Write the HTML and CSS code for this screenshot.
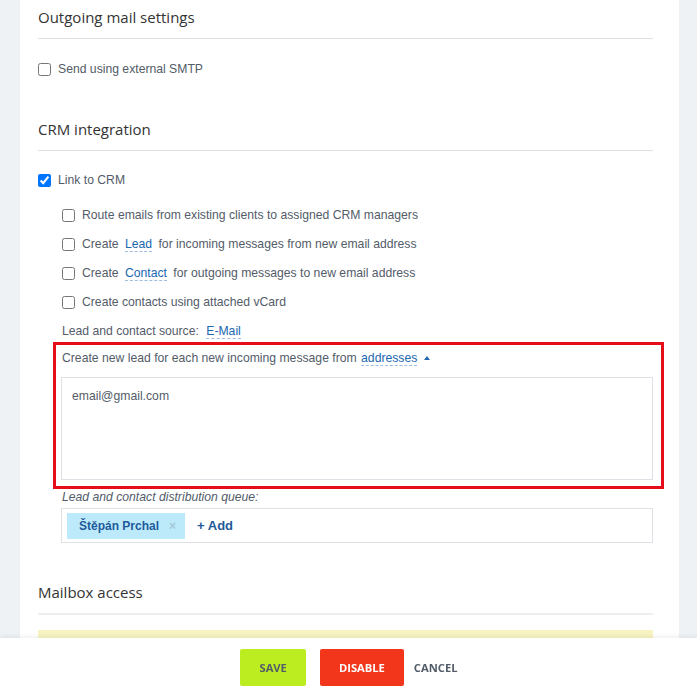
FILE: index.html
```html
<!DOCTYPE html>
<html lang="en">
<head>
<meta charset="utf-8">
<title>Mailbox settings</title>
<link rel="stylesheet" href="styles.css">
</head>
<body>
<div class="panel">
  <h2 class="section-title">Outgoing mail settings</h2>
  <label class="check-row first-row"><input type="checkbox"><span>Send using external SMTP</span></label>

  <h2 class="section-title crm-title">CRM integration</h2>
  <label class="check-row link-row"><input type="checkbox" checked><span>Link to CRM</span></label>

  <div class="sub">
    <label class="check-row sub-row first-sub"><input type="checkbox"><span>Route emails from existing clients to assigned CRM managers</span></label>
    <label class="check-row sub-row"><input type="checkbox"><span>Create <a class="dash-link">Lead</a> for incoming messages from new email address</span></label>
    <label class="check-row sub-row"><input type="checkbox"><span>Create <a class="dash-link">Contact</a> for outgoing messages to new email address</span></label>
    <label class="check-row sub-row"><input type="checkbox"><span>Create contacts using attached vCard</span></label>
    <div class="text-row sub-row">Lead and contact source: <a class="dash-link src-link">E-Mail</a></div>

    <div class="highlight">
      <div class="text-row">Create new lead for each new incoming message from <a class="dash-link addr-link">addresses</a><span class="caret"></span></div>
      <div class="textarea">email@gmail.com</div>
    </div>

    <div class="queue-label">Lead and contact distribution queue:</div>
    <div class="queue-box">
      <span class="tag">Štěpán Prchal<span class="tag-x">×</span></span>
      <a class="add-link">+ Add</a>
    </div>
  </div>

  <h2 class="section-title mailbox-title">Mailbox access</h2>
  <div class="alert"></div>
</div>

<div class="footer">
  <button class="btn btn-save">SAVE</button>
  <button class="btn btn-disable">DISABLE</button>
  <button class="btn btn-cancel">CANCEL</button>
</div>
</body>
</html>
```

FILE: styles.css
```css
html, body {
  margin: 0;
  padding: 0;
  background: #eef2f4;
  height: 100%;
  overflow: hidden;
}
body {
  font-family: "Liberation Sans", Arial, sans-serif;
  font-size: 12.2px;
  color: #535c69;
}
.panel {
  margin: 0 18px 0 20px;
  background: #fff;
  padding: 7px 26px 0 18px;
  min-height: 100%;
  box-sizing: border-box;
}
.section-title {
  margin: 0;
  font-family: "Open Sans", sans-serif;
  font-weight: 400;
  font-size: 15px;
  line-height: 20px;
  color: #333;
  padding-bottom: 11px;
  border-bottom: 1px solid #dfe0e3;
}
.crm-title { margin-top: 40px; }
.mailbox-title {
  margin-top: 39px;
  border-bottom: 2px solid #edeef0;
}
.check-row {
  display: flex;
  align-items: center;
  gap: 7px;
  height: 20px;
}
.check-row input {
  margin: 0;
  width: 13px;
  height: 13px;
}
.first-row { margin-top: 20px; }
.link-row { margin-top: 19px; }
.sub { padding-left: 24px; }
.first-sub { margin-top: 15px; }
.sub-row + .sub-row { margin-top: 9px; }
.text-row {
  height: 20px;
  line-height: 20px;
}
.dash-link {
  color: #2067b0;
  border-bottom: 1px dashed #9fbde0;
  margin: 0 3px;
}
.src-link { margin-left: 4px; }
.addr-link { margin: 0 0 0 1px; }
.caret {
  display: inline-block;
  width: 0;
  height: 0;
  border-left: 3px solid transparent;
  border-right: 3px solid transparent;
  border-bottom: 4px solid #2067b0;
  margin-left: 7px;
  vertical-align: 2px;
}
.highlight {
  margin: 1px -11px 0 -9px;
  border: 3px solid #e60d1b;
  padding: 3px 8px 6px 6px;
}
.textarea {
  margin: 9px 0 0 -1px;
  border: 1px solid #dde1e6;
  padding: 9px 10px;
  box-sizing: border-box;
  height: 103px;
  color: #535c69;
  line-height: 18px;
}
.queue-label {
  font-style: italic;
  line-height: 16px;
  height: 16px;
}
.queue-box {
  margin: 3px 0 0 -1px;
  height: 35px;
  box-sizing: border-box;
  border: 1px solid #dde1e6;
  padding: 4px 5px;
  display: flex;
  align-items: center;
  gap: 12px;
}
.tag {
  display: flex;
  align-items: center;
  height: 26px;
  background: #bdeafb;
  padding: 0 9px 0 12px;
  font-weight: bold;
  font-size: 12px;
  color: #1f5a9a;
}
.tag-x {
  color: #a3c9d8;
  font-size: 12px;
  margin-left: 10px;
}
.add-link {
  color: #1f5a9a;
  font-weight: bold;
  font-size: 13px;
}
.alert {
  margin-top: 15px;
  height: 60px;
  background: #f7f4c1;
}
.footer {
  position: fixed;
  left: 0;
  right: 0;
  bottom: 0;
  height: 61px;
  background: #fff;
  box-shadow: 0 -2px 4px rgba(0, 0, 0, 0.06);
  display: flex;
  justify-content: center;
  align-items: flex-start;
  padding-top: 11px;
  box-sizing: border-box;
  padding-left: 1px;
}
.btn {
  font-family: "Open Sans", sans-serif;
  font-weight: 700;
  font-size: 11.2px;
  height: 37px;
  border: 0;
  border-radius: 2px;
  padding: 0 19px;
  color: #535c69;
  background: transparent;
}
.btn-save { background: #bbed21; }
.btn-disable {
  background: #f1361b;
  color: #fff;
  margin-left: 14px;
}
.btn-cancel {
  padding: 0 0 0 10px;
}
```
